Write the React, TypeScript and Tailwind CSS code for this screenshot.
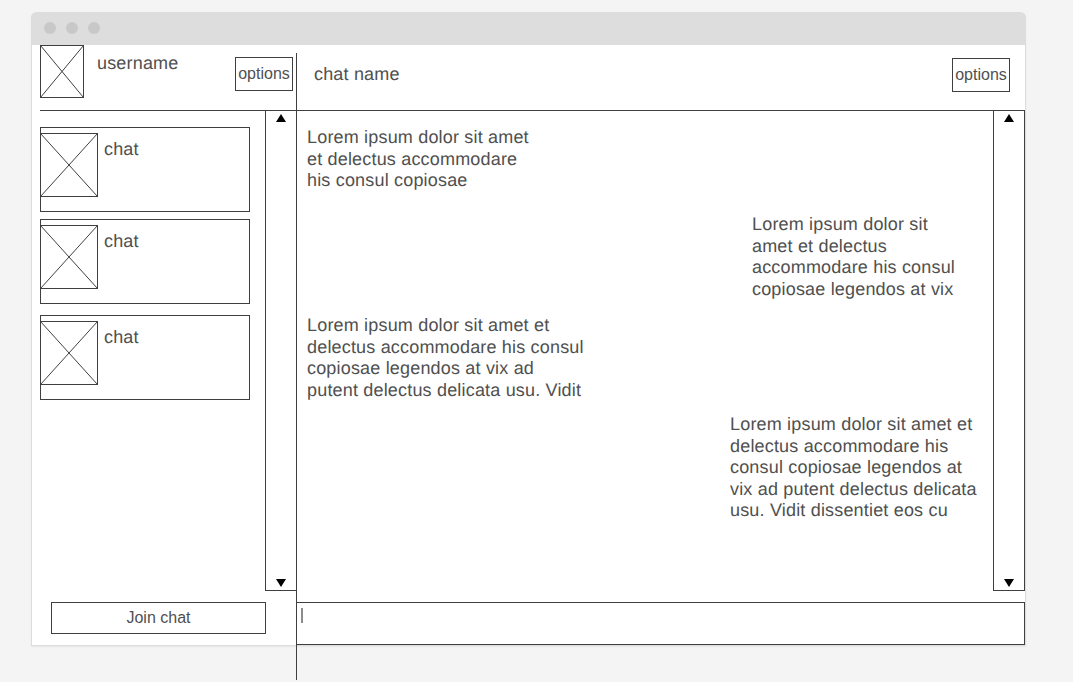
import React from "react";

const line = "#3f3f3f";

function Placeholder({ width, height, className = "" }: { width: number; height: number; className?: string }) {
  return (
    <svg
      width={width}
      height={height}
      viewBox={`0 0 ${width} ${height}`}
      fill="none"
      stroke={line}
      className={`block shrink-0 ${className}`}
    >
      <rect x="0.5" y="0.5" width={width - 1} height={height - 1} fill="#fff" />
      <path d={`M0.5 0.5L${width - 0.5} ${height - 0.5}M${width - 0.5} 0.5L0.5 ${height - 0.5}`} />
    </svg>
  );
}

function OptionsButton({ className }: { className: string }) {
  return (
    <button
      className={`flex h-[34px] w-[58px] shrink-0 items-center justify-center border border-[#3f3f3f] text-base leading-none ${className}`}
    >
      options
    </button>
  );
}

function Scrollbar({ className = "" }: { className?: string }) {
  return (
    <div className={`flex shrink-0 flex-col items-center justify-between border-b border-l border-[#3f3f3f] pt-[3px] pb-[3px] ${className}`}>
      <svg width="10" height="8" viewBox="0 0 10 8" className="block">
        <path d="M5 0L10 8H0Z" fill="#000" />
      </svg>
      <svg width="10" height="8" viewBox="0 0 10 8" className="block">
        <path d="M5 8L10 0H0Z" fill="#000" />
      </svg>
    </div>
  );
}

function ChatCard({ className = "" }: { className?: string }) {
  return (
    <div className={`flex h-[85px] w-[210px] border border-[#3f3f3f] pt-[5px] ${className}`}>
      <Placeholder width={58} height={64} className="-ml-px" />
      <span className="mt-1.5 ml-1.5">chat</span>
    </div>
  );
}

function Message({ lines, className }: { lines: string[]; className: string }) {
  return (
    <div className={`whitespace-nowrap ${className}`}>
      {lines.map((text) => (
        <div key={text}>{text}</div>
      ))}
    </div>
  );
}

export default function App() {
  return (
    <div className="flex h-[682px] w-[1073px] overflow-hidden bg-[#f4f4f4] pt-3 pl-[31px] font-['Liberation_Sans',Arial,sans-serif] text-[#505050] [text-rendering:geometricPrecision]">
      <div className="relative flex h-[634px] w-[995px] flex-col rounded-t-md border-x border-b border-[#dddddd] bg-white shadow-[0_1px_2px_rgba(0,0,0,0.06)]">
        <div className="-mx-px flex h-[33px] shrink-0 items-center gap-2.5 rounded-t-md bg-[#dddddd] pb-px pl-[13px]">
          <span className="size-3 rounded-full bg-[#c8c8c8]" />
          <span className="size-3 rounded-full bg-[#c8c8c8]" />
          <span className="size-3 rounded-full bg-[#c8c8c8]" />
        </div>

        <div className="flex h-[600px] text-[18px] leading-[21.6px] tracking-[0.18px]">
          <aside className="flex w-[264px] shrink-0 flex-col">
            <header className="flex h-[65px] shrink-0 pl-2">
              <Placeholder width={44} height={53} />
              <span className="mt-2 ml-[13px]">username</span>
              <OptionsButton className="mt-3 mr-[3px] ml-auto tracking-normal" />
            </header>
            <div className="ml-2 flex h-[481px] shrink-0 justify-between border-t border-[#3f3f3f]">
              <div className="flex flex-col pt-4">
                <ChatCard />
                <ChatCard className="mt-[7px]" />
                <ChatCard className="mt-[11px]" />
              </div>
              <Scrollbar className="w-[31px]" />
            </div>
            <button className="mt-[11px] ml-[19px] flex h-8 w-[215px] shrink-0 items-center justify-center border border-[#3f3f3f] text-base leading-none tracking-normal">
              Join chat
            </button>
          </aside>

          <main className="flex w-[729px] shrink-0 flex-col">
            <header className="flex h-[65px] shrink-0 justify-between">
              <h1 className="mt-[19px] ml-[18px]">chat name</h1>
              <OptionsButton className="mt-[13px] mr-[15px] tracking-normal" />
            </header>
            <div className="flex h-[481px] shrink-0 border-t border-[#3f3f3f]">
              <div className="flex flex-1 flex-col items-start pt-4 pl-[11px]">
                <Message
                  className="h-[87px]"
                  lines={["Lorem ipsum dolor sit amet", "et delectus accommodare", "his consul copiosae"]}
                />
                <Message
                  className="ml-[445px] h-[101px]"
                  lines={["Lorem ipsum dolor sit", "amet et delectus", "accommodare his consul", "copiosae legendos at vix"]}
                />
                <Message
                  className="h-[99px]"
                  lines={[
                    "Lorem ipsum dolor sit amet et",
                    "delectus accommodare his consul",
                    "copiosae legendos at vix ad",
                    "putent delectus delicata usu. Vidit",
                  ]}
                />
                <Message
                  className="ml-[423px]"
                  lines={[
                    "Lorem ipsum dolor sit amet et",
                    "delectus accommodare his",
                    "consul copiosae legendos at",
                    "vix ad putent delectus delicata",
                    "usu. Vidit dissentiet eos cu",
                  ]}
                />
              </div>
              <Scrollbar className="w-8 border-r" />
            </div>
            <div className="mt-[11px] h-[43px] shrink-0 border border-[#3f3f3f] pt-[5px] pl-1">
              <div className="h-[15px] w-0.5 bg-[#8c8c8c]" />
            </div>
          </main>
        </div>
        <div className="absolute top-[41px] left-[264px] h-[627px] w-px bg-[#3f3f3f]" />
      </div>
    </div>
  );
}
